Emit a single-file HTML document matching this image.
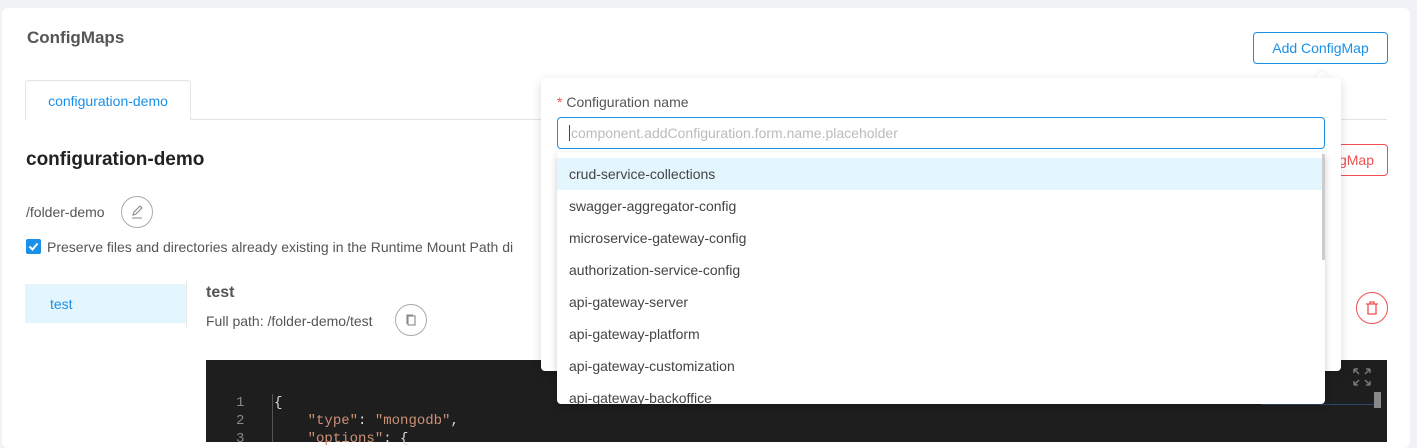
<!DOCTYPE html>
<html><head><style>
*{box-sizing:border-box;margin:0;padding:0}
body{width:1417px;height:442px;overflow:hidden;background:#f0f2f5;font-family:"Liberation Sans",sans-serif;position:relative;font-size:14px;color:#444}
.a{position:absolute}
.card{left:2px;top:8px;width:1408px;height:440px;background:#fff;border-radius:6px}
.circ{border-radius:50%;border:1px solid #aaa;width:32px;height:32px;display:flex;align-items:center;justify-content:center}
.item{position:absolute;left:0;width:766px;height:32px;line-height:32px;padding-left:12px;color:#444;font-size:14px}
.code{font-family:"Liberation Mono",monospace;font-size:14px}
</style></head><body>
<div class="a card"></div>
<div class="a" style="left:27px;top:28px;font-size:17px;font-weight:bold;color:#555">ConfigMaps</div>
<div class="a" style="left:1253px;top:32px;width:135px;height:32px;border:1px solid #1a90e8;border-radius:4px;color:#1a90e8;line-height:30px;text-align:center">Add ConfigMap</div>
<div class="a" style="left:25px;top:119px;width:1362px;height:1px;background:#e4e4e4"></div>
<div class="a" style="left:25px;top:80px;width:166px;height:40px;border:1px solid #e4e4e4;border-bottom:none;border-radius:4px 4px 0 0;background:#fff;color:#1a90e8;text-align:center;line-height:41px">configuration-demo</div>
<div class="a" style="left:26px;top:149px;font-size:19px;font-weight:bold;color:#222">configuration-demo</div>
<div class="a" style="left:1300px;top:144px;width:88px;height:32px;border:1px solid #f05050;border-radius:4px;color:#f05050;line-height:30px;text-align:right;padding-right:13px">gMap</div>
<div class="a" style="left:26px;top:204px;color:#555">/folder-demo</div>
<div class="a circ" style="left:121px;top:196px"><svg width="14" height="14" viewBox="0 0 14 14" fill="none" stroke="#888" stroke-width="1.1"><path d="M3 10l1-3 6-6 2 2-6 6-3 1zM2 13h10"/></svg></div>
<div class="a" style="left:26px;top:239px;width:15px;height:15px;background:#1a90e8;border-radius:2px"><svg width="15" height="15"><path d="M3.5 7.5l3 3 5-6" stroke="#fff" stroke-width="2" fill="none"/></svg></div>
<div class="a" style="left:47px;top:239px;color:#555">Preserve files and directories already existing in the Runtime Mount Path di</div>
<div class="a" style="left:25px;top:284px;width:161px;height:39px;background:#e3f5fd;color:#1a90e8;line-height:40px;padding-left:25px">test</div>
<div class="a" style="left:186px;top:280px;width:1px;height:48px;background:#e8e8e8"></div>
<div class="a" style="left:206px;top:284px;font-size:16px;font-weight:bold;color:#555">test</div>
<div class="a" style="left:206px;top:313px;color:#555">Full path: /folder-demo/test</div>
<div class="a circ" style="left:395px;top:304px"><svg width="14" height="14" fill="none" stroke="#888" stroke-width="1.1"><rect x="4" y="3" width="7" height="9"/><path d="M3 11V2h6"/></svg></div>
<div class="a circ" style="left:1356px;top:292px;border-color:#f05050"><svg width="16" height="16" fill="none" stroke="#f05050" stroke-width="1.3"><path d="M2 4h12M6 4V2h4v2M4 4v10h8V4"/></svg></div>
<div class="a" style="left:206px;top:360px;width:1181px;height:82px;background:#1e1e1e"></div>
<div class="a code" style="left:236px;top:394px;color:#888;line-height:18px">1<br>2<br>3</div>
<div class="a" style="left:272px;top:394px;width:1px;height:48px;background:#555"></div>
<div class="a code" style="left:274px;top:394px;color:#ddd;line-height:18px;white-space:pre">{
    <span style="color:#ce9178">"type"</span>: <span style="color:#ce9178">"mongodb"</span>,
    <span style="color:#ce9178">"options"</span>: {</div>
<div class="a" style="left:1352px;top:367px"><svg width="20" height="20" fill="none" stroke="#777" stroke-width="1.5"><path d="M2 2l5 5M2 2h4M2 2v4M18 2l-5 5M18 2h-4M18 2v4M2 18l5-5M2 18h4M2 18v-4M18 18l-5-5M18 18h-4M18 18v-4"/></svg></div>
<div class="a" style="left:1262px;top:404px;width:112px;height:1px;background:#2a4a6a"></div>
<div class="a" style="left:1374px;top:392px;width:7px;height:16px;background:#888"></div>
<div class="a" style="left:1316px;top:73px;width:12px;height:12px;background:#fff;transform:rotate(45deg);box-shadow:-1px -1px 3px rgba(0,0,0,.06)"></div>
<div class="a" style="left:541px;top:78px;width:800px;height:293px;background:#fff;border-radius:4px;box-shadow:0 3px 10px rgba(0,0,0,.15)"></div>
<div class="a" style="left:557px;top:94px;color:#555"><span style="color:#f05050">*</span> Configuration name</div>
<div class="a" style="left:557px;top:117px;width:768px;height:32px;border:1px solid #1a90e8;border-radius:4px;padding-left:11px;line-height:30px;color:#bbb;font-size:14px"><span style="border-left:1px solid #444;margin-right:1px"></span>component.addConfiguration.form.name.placeholder</div>
<div class="a" style="left:557px;top:152px;width:768px;height:252px;background:#fff;border-radius:4px;box-shadow:0 3px 8px rgba(0,0,0,.2);overflow:hidden">
<div class="item" style="top:6px;background:#e3f5fd">crud-service-collections</div>
<div class="item" style="top:38px">swagger-aggregator-config</div>
<div class="item" style="top:70px">microservice-gateway-config</div>
<div class="item" style="top:102px">authorization-service-config</div>
<div class="item" style="top:134px">api-gateway-server</div>
<div class="item" style="top:166px">api-gateway-platform</div>
<div class="item" style="top:198px">api-gateway-customization</div>
<div class="item" style="top:230px">api-gateway-backoffice</div>
<div class="a" style="left:765px;top:2px;width:3px;height:106px;background:#ccc"></div>
</div>
</body></html>
